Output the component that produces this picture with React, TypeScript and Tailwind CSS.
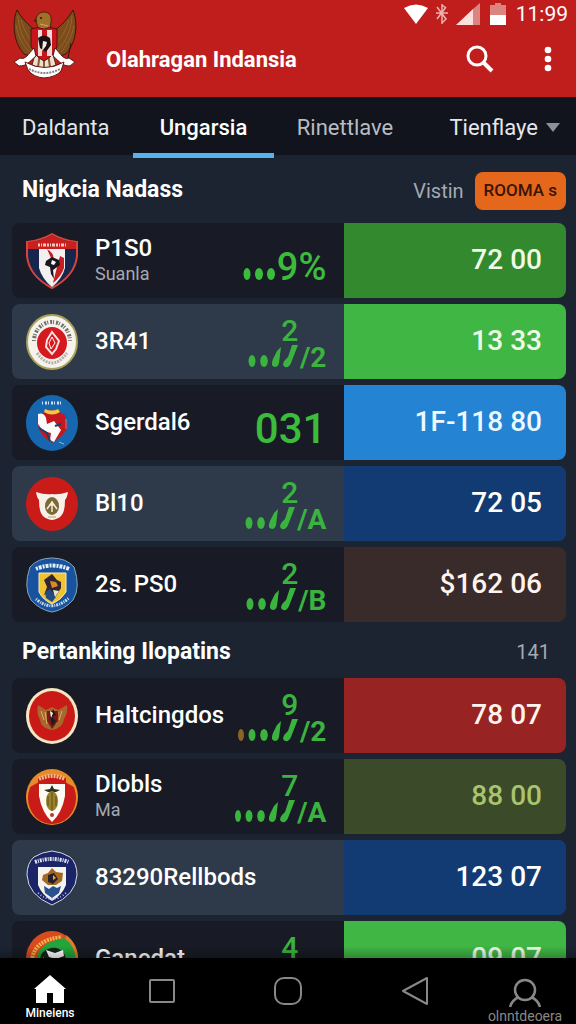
import type { ReactNode } from "react";

type Team = {
  name: string;
  note?: string;
  crest: ReactNode;
  metric?: ReactNode;
  value: string;
  rowClass: string;
  valueClass: string;
};

const DARK = "bg-[#181b25]";
const LIGHT = "bg-[#2e3a4a]";

function Garuda() {
  return (
    <svg viewBox="0 0 66 72" className="h-[72px] w-[66px]" aria-hidden="true">
      <path d="M5 2C0 14 1 34 12 46l12 4 4-24C20 20 12 14 5 2z" fill="#7d4c1c" stroke="#3b1709" strokeWidth="1" />
      <path d="M61 2c5 12 4 32-7 44l-12 4-4-24C46 20 54 14 61 2z" fill="#7d4c1c" stroke="#3b1709" strokeWidth="1" />
      <path d="M6 8c1 14 5 24 14 34M4 17c2 12 7 20 13 27M9 12c3 10 7 17 13 24M60 8c-1 14-5 24-14 34M62 17c-2 12-7 20-13 27M57 12c-3 10-7 17-13 24" fill="none" stroke="#94652c" strokeWidth="1" />
      <path d="M26 24c1-5-2-8-2-12 0-5 4-8 8-8 6 0 8 5 7 10l-1 10z" fill="#a0702a" stroke="#4a210b" strokeWidth="1" />
      <path d="M24 11l-3 2 4 1z" fill="#4a210b" />
      <circle cx="29" cy="10" r="1" fill="#2b1207" />
      <path d="M28 16l8 2M28 20l9 1" stroke="#d8a955" strokeWidth="1" />
      <path d="M24 43h16l4 14-12 5-12-5z" fill="#e9e0d2" stroke="#5a2210" strokeWidth="1" />
      <path d="M32 44v17M28 45l-2 14M36 45l2 14" stroke="#8c5d2a" strokeWidth="2" />
      <path d="M19 21q7-3 13 0 6-3 13 0v17q-3 10-13 15-10-5-13-15z" fill="#c8151c" stroke="#5a0d0d" strokeWidth="1" />
      <path d="M26 22h4v26h-4zM35 22h5v26h-5z" fill="#f0d9d5" />
      <path d="M26 30q6-5 12 0l1 7-5 7-6-4z" fill="#1b1112" />
      <path d="M31 33l4 1-1 4-4 5z" fill="#f4efec" />
      <path d="M22 40C16 46 14 52 8 50L2 54l5 4c8 0 10-4 17-10zM43 40c6 6 8 12 14 10l6 4-5 4c-8 0-10-4-17-10z" fill="#fff" stroke="#5b1715" strokeWidth="1" />
      <path d="M59 35l-3 15" stroke="#28130d" strokeWidth="1" />
      <path d="M13 54q20 11 39 0l-3 9q-5 6-17 7-11-1-16-8z" fill="#fff" stroke="#6b1513" strokeWidth="1" />
      <path d="M17 61q16 8 31 0" fill="none" stroke="#8a8080" strokeWidth="2" strokeDasharray="2 1" />
    </svg>
  );
}

function Crest({ children }: { children: ReactNode }) {
  return (
    <svg viewBox="0 0 52 56" className="h-14 w-13 shrink-0" aria-hidden="true">
      {children}
    </svg>
  );
}

const crestShield = (
  <Crest>
    <path d="M26 1q10 6 25 8v14q-2 20-25 32Q3 43 1 23V9Q16 7 26 1z" fill="#17264d" stroke="#d8453a" strokeWidth="2" />
    <path d="M2 9q15-1 24-7 9 6 24 7v7H2z" fill="#c9201f" />
    <path d="M13 16h26v19q-3 11-13 19-10-8-13-19z" fill="#f3f0f2" />
    <path d="M21 16q8 5 6 10l-6 4 6 7-2-12z" fill="#c51f23" />
    <path d="M34 23l4 2v10q-3 9-11 15l3-12z" fill="#c51f23" />
    <path d="M20 28l6-4 7 3 1 5-7 5 1 9-3-5-1-7-5-2z" fill="#1a1620" />
    <path d="M26 27l4 2-2 3-3-1z" fill="#fff" />
    <path d="M12 12h28" stroke="#f7c8bf" strokeWidth="3" strokeDasharray="2 1 1 1 3 1" />
  </Crest>
);

const crestFlame = (
  <Crest>
    <ellipse cx="26" cy="28" rx="25" ry="27" fill="#f6f3ed" stroke="#aaa15b" strokeWidth="2" />
    <ellipse cx="26" cy="29" rx="15" ry="16" fill="#d5191e" />
    <path d="M8 27a18 19 0 0 1 36 0" fill="none" stroke="#706d68" strokeWidth="4" strokeDasharray="1 2 2 1" />
    <path d="M11 39q15 20 30 0" fill="none" stroke="#b5b0a9" strokeWidth="3" strokeDasharray="2 1" />
    <path d="M26 18l7 9-3 8-4 5-6-7 1-7z" fill="none" stroke="#ffe2df" strokeWidth="2" />
    <path d="M26 23l-3 6 2 6 4-6z" fill="none" stroke="#fff" strokeWidth="1" />
  </Crest>
);

const crestBlue = (
  <Crest>
    <ellipse cx="26" cy="28" rx="26" ry="28" fill="#1767b0" />
    <path d="M16 8h20" stroke="#cfe2f5" strokeWidth="3" strokeDasharray="1 2 2 1" />
    <path d="M11 20q8-1 10-6 5 3 10 0 3 4 8 6l2 14q-5 8-15 14-13-8-14-18z" fill="#c5181e" />
    <path d="M19 14q7 3 13 0l2 3q-8 5-16 0z" fill="#f1c941" />
    <path d="M12 19q6-2 8 4l1 6 7-3 7 9-7 12-4-2 1-7-8-2-5-7z" fill="#fafafa" />
    <path d="M13 33l8 5 3 8M29 31l6-2" fill="none" stroke="#183f6b" strokeWidth="2" />
    <path d="M40 24v10" stroke="#ef6c65" strokeWidth="1" />
    <path d="M33 47l5 2" stroke="#83bdeb" strokeWidth="1" />
  </Crest>
);

const crestRed = (
  <Crest>
    <ellipse cx="26" cy="28" rx="26" ry="27" fill="#c91b18" />
    <path d="M10 16q9 3 16 2 7 1 16-2-1 6-3 8 0 12-4 16-3 3-9 4-6-1-9-4-4-4-4-16-2-2-3-8z" fill="#f8f1e9" />
    <ellipse cx="26" cy="30" rx="7" ry="9" fill="#7b6a35" />
    <path d="M21 33l5-7 5 7M26 25v11M23 29h6" fill="none" stroke="#f4ecd8" strokeWidth="1.5" />
    <path d="M22 41h8" stroke="#b5a165" strokeWidth="1" />
  </Crest>
);

const crestRoyal = (
  <Crest>
    <path d="M26 1q14 0 22 9 7 20-1 33-9 10-21 12Q14 53 5 43-3 30 4 10 12 1 26 1z" fill="#17539f" stroke="#8ba5b5" strokeWidth="1" />
    <path d="M10 12q16-7 33 0" fill="none" stroke="#e5edf6" strokeWidth="4" strokeDasharray="2 1 3 1" />
    <path d="M10 42q16 14 33-1" fill="none" stroke="#c9d9eb" strokeWidth="3" strokeDasharray="1 1 2 1" />
    <path d="M13 16h27v19q-5 8-14 12-9-4-13-12z" fill="#f0c332" stroke="#f7ebbb" strokeWidth="1" />
    <path d="M18 23l8-6 5 6 4 2v6l-5 8-7-4-5 3 3-8z" fill="#302530" />
    <path d="M24 24l6 1 2 4-6 2z" fill="#d98b25" />
    <path d="M19 35l5-3 6 8-4 5-6-4z" fill="#224a83" />
    <path d="M27 33l6 1-4 6z" fill="#e6e6dc" />
  </Crest>
);

const crestEagle = (
  <Crest>
    <ellipse cx="26" cy="28" rx="26" ry="28" fill="#f5e7c3" />
    <ellipse cx="26" cy="28" rx="23" ry="25" fill="#c91a17" />
    <path d="M12 17l8 5 6-3 6 3 9-5q1 8-3 14-1 9-12 11-11-2-12-10-4-7-2-15z" fill="#a8672d" />
    <path d="M15 23l3 9M19 24l2 12M36 23l-3 9M32 24l-2 12" stroke="#d9b16a" strokeWidth="1" />
    <path d="M21 23h11v10l-6 8-5-8z" fill="#7e1715" />
    <path d="M27 21l3 6-4 2 4 4-4 5-2-9z" fill="#22191d" />
    <path d="M24 23l3 2-2 5z" fill="#fff4df" />
  </Crest>
);

const crestGold = (
  <Crest>
    <ellipse cx="26" cy="28" rx="26" ry="28" fill="#e58c29" />
    <ellipse cx="26" cy="29" rx="24" ry="26" fill="#c91b18" />
    <path d="M4 18Q10 2 26 1q16 1 22 17l-9-5H13z" fill="#e58c29" />
    <path d="M12 9q14-7 28 0v5H12z" fill="#c91b18" />
    <path d="M13 10q13-6 26 0" fill="none" stroke="#f4ba89" strokeWidth="4" strokeDasharray="2 1" />
    <path d="M13 15h26v12q-3 17-13 26-10-9-13-26z" fill="#fdf9f3" />
    <path d="M26 16l2 4 6 1-4 2h-8l-4-2 6-1z" fill="#28301e" />
    <ellipse cx="26" cy="32" rx="6" ry="10" fill="#98832c" />
    <path d="M26 23v19M22 27v10M30 27v10" stroke="#5a4c19" strokeWidth="1" />
    <circle cx="26" cy="46" r="2" fill="#b23a32" />
  </Crest>
);

const crestNavy = (
  <Crest>
    <path d="M26 1q10 1 18 6 7 6 7 18-1 20-25 30Q2 45 1 25 1 13 8 7 16 2 26 1z" fill="#1c2468" stroke="#d5d9e6" strokeWidth="1" />
    <path d="M9 12q17-6 34 0" fill="none" stroke="#dfe3f0" strokeWidth="4" strokeDasharray="2 1 1 1" />
    <path d="M12 17h28v18q-4 10-14 16-10-6-14-16z" fill="#f6f2ec" />
    <path d="M26 18l4 4 7 1-1 8-6 4h-8l-6-5 1-5 5-2z" fill="#a06823" />
    <path d="M22 25l6-2 4 6-5 5-5-2z" fill="#251f2b" />
    <path d="M27 25l3 3-3 2z" fill="#e7a835" />
    <path d="M18 36l5 3 4-3 4 2 4-2-2 7-7 5-7-5z" fill="#28518f" />
    <path d="M12 43q14 12 28 0" fill="none" stroke="#aeb5da" strokeWidth="2" strokeDasharray="1 2" />
  </Crest>
);

const crestGreen = (
  <Crest>
    <ellipse cx="26" cy="28" rx="26" ry="28" fill="#d94b1f" />
    <path d="M40 4a26 28 0 0 1 12 26H36z" fill="#e5792a" />
    <path d="M6 30Q7 9 36 6" fill="none" stroke="#f3b44a" strokeWidth="4" strokeDasharray="2 1" />
    <path d="M10 32q0-20 28-25 12 8 12 24l-6 16H16z" fill="#22a53b" />
    <path d="M14 32q-1-11 8-14 9-4 16 4l3 8-4 12H18z" fill="#14231b" />
    <path d="M20 19l9 3 8-3 1 6-8 3-7-2zM17 26l7 6-3 5z" fill="#fff" />
  </Crest>
);

function Big({ dots = false, children }: { dots?: boolean; children: ReactNode }) {
  return (
    <div className="flex items-baseline gap-0.5 pt-3 text-[#3bbd3b]">
      {dots && (
        <svg viewBox="0 0 32 12" className="h-3 w-8" fill="currentColor" aria-hidden="true">
          <ellipse cx="4" cy="6" rx="3.5" ry="6" />
          <ellipse cx="16" cy="6" rx="4" ry="6" />
          <ellipse cx="28" cy="6" rx="4" ry="6" />
        </svg>
      )}
      <span className={dots ? "text-[38px] leading-10 font-medium" : "text-[42px] leading-10 font-medium"}>{children}</span>
    </div>
  );
}

function Trend({ top, end, lead }: { top: string; end: string; lead?: string }) {
  return (
    <div className="flex flex-col items-end pt-1 text-[#3bb33f]">
      <span className="mr-7 text-[30px] leading-[26px] font-medium">{top}</span>
      <div className="flex items-end">
        <svg viewBox="0 0 62 26" className="h-[26px] w-[62px]" fill="currentColor" aria-hidden="true">
          {lead && <ellipse cx="3" cy="17" rx="3" ry="6" fill={lead} />}
          <ellipse cx="14" cy="17" rx="3.5" ry="6" />
          <ellipse cx="26" cy="17" rx="3.8" ry="6" />
          <path d="M43 3l-2 16q-1 4-4 4-5-1-2-8l4-8z" />
          <path d="M60 1l-7 18q-2 5-6 4-4-2 0-7l3-3 4-12z" />
        </svg>
        <span className="text-[28px] leading-6 font-bold">/{end}</span>
      </div>
    </div>
  );
}

const matches: Team[] = [
  { name: "P1S0", note: "Suanla", crest: crestShield, metric: <Big dots>9%</Big>, value: "72 00", rowClass: DARK, valueClass: "bg-[#33892e] text-[#effbe5]" },
  { name: "3R41", crest: crestFlame, metric: <Trend top="2" end="2" />, value: "13 33", rowClass: LIGHT, valueClass: "bg-[#40b645] text-[#effbe5]" },
  { name: "Sgerdal6", crest: crestBlue, metric: <Big>031</Big>, value: "1F-118 80", rowClass: DARK, valueClass: "bg-[#2583d3] text-[#edf8ff]" },
  { name: "Bl10", crest: crestRed, metric: <Trend top="2" end="A" />, value: "72 05", rowClass: LIGHT, valueClass: "bg-[#123b73] text-white" },
  { name: "2s. PS0", crest: crestRoyal, metric: <Trend top="2" end="B" />, value: "$162 06", rowClass: DARK, valueClass: "bg-[#392b29] text-[#fff3ee]" },
];

const rankings: Team[] = [
  { name: "Haltcingdos", crest: crestEagle, metric: <Trend top="9" end="2" lead="#8c6424" />, value: "78 07", rowClass: DARK, valueClass: "bg-[#982323] text-[#fff3ee]" },
  { name: "Dlobls", note: "Ma", crest: crestGold, metric: <Trend top="7" end="A" lead="#3bb33f" />, value: "88 00", rowClass: DARK, valueClass: "bg-[#3b4a29] text-[#a9c46c]" },
  { name: "83290Rellbods", crest: crestNavy, value: "123 07", rowClass: LIGHT, valueClass: "bg-[#123b73] text-white" },
  { name: "Ganedat", crest: crestGreen, metric: <Trend top="4" end="2" />, value: "09 07", rowClass: DARK, valueClass: "bg-[#40b645] text-[#effbe5]" },
];

function TeamRow({ team }: { team: Team }) {
  return (
    <li className={`flex h-[75px] shrink-0 overflow-hidden rounded-lg ${team.rowClass}`}>
      <div className="flex w-3/5 items-center pr-[18px] pl-[14px]">
        {team.crest}
        <div className="ml-[17px] flex-1 pb-0.5 whitespace-nowrap">
          <p className="text-2xl leading-7 font-medium text-white">{team.name}</p>
          {team.note && <p className="text-lg leading-6 text-[#a5a9b2]">{team.note}</p>}
        </div>
        {team.metric}
      </div>
      <div className={`flex w-2/5 items-center justify-end pr-6 pb-0.5 text-[28px] font-medium ${team.valueClass}`}>{team.value}</div>
    </li>
  );
}

function StatusBar() {
  return (
    <div className="flex h-7 items-center justify-end gap-2 pr-2 text-white">
      <svg viewBox="0 0 24 20" className="h-5 w-6" aria-hidden="true">
        <path d="M0 4q12-7 24 0L12 20z" fill="#fff" />
      </svg>
      <svg viewBox="0 0 12 20" className="h-5 w-3" fill="none" stroke="#eeb3b0" strokeWidth="1.5" aria-hidden="true">
        <path d="M6 0v20M1 3l9 12-4 4M10 3L1 15M0 9h12M6 1l4 3" />
      </svg>
      <svg viewBox="0 0 24 22" className="h-[22px] w-6" aria-hidden="true">
        <path d="M0 22L17 6v16z" fill="#fbe0dd" />
        <path d="M17 6l7-6v22h-7z" fill="#dc8580" />
      </svg>
      <svg viewBox="0 0 16 22" className="mx-0.5 h-[22px] w-4" aria-hidden="true">
        <path d="M0 2h5V0h6v2h5v10H0z" fill="#dc8580" />
        <path d="M0 12h16v10H0z" fill="#fff" />
      </svg>
      <span className="text-[21px] leading-6">11:99</span>
    </div>
  );
}

const tabs = ["Daldanta", "Ungarsia", "Rinettlave", "Tienflaye"];
const tabStyles = [
  "pl-[22px] text-[#e4e6ea]",
  "justify-center font-medium text-white border-b-[5px] border-[#57b3ee] pt-[5px]",
  "justify-center text-[#b9bcc3]",
  "justify-end gap-2 pr-4 text-[#e4e6ea]",
];

function BottomNav() {
  const item = "flex flex-col items-center justify-center";
  return (
    <nav className="grid h-[66px] shrink-0 grid-cols-[100fr_124fr_128fr_126fr_98fr] bg-black text-[#8a8886]">
      <button className={`${item} pt-4 text-white`}>
        <svg viewBox="0 0 32 28" className="h-7 w-8" fill="currentColor" aria-hidden="true">
          <path d="M16 0l16 14h-2v14H19V18h-6v10H2V14H0z" />
        </svg>
        <span className="text-xs leading-5 font-medium">Mineiens</span>
      </button>
      <button className={item} aria-label="Recent">
        <svg viewBox="0 0 26 24" className="h-6 w-[26px]" fill="none" stroke="currentColor" strokeWidth="2" aria-hidden="true">
          <rect x="1" y="1" width="24" height="22" rx="1" />
        </svg>
      </button>
      <button className={item} aria-label="Home">
        <svg viewBox="0 0 28 28" className="size-7" fill="none" stroke="currentColor" strokeWidth="2" aria-hidden="true">
          <rect x="1" y="1" width="26" height="26" rx="9" />
        </svg>
      </button>
      <button className={item} aria-label="Back">
        <svg viewBox="0 0 26 28" className="h-7 w-[26px]" fill="none" stroke="currentColor" strokeWidth="2" strokeLinejoin="round" aria-hidden="true">
          <path d="M25 1v26L1 14z" />
        </svg>
      </button>
      <button className={`${item} pt-5 pr-1`}>
        <svg viewBox="0 0 32 30" className="h-[30px] w-8" fill="none" stroke="currentColor" strokeWidth="2.5" aria-hidden="true">
          <circle cx="16" cy="12" r="10" />
          <path d="M1 29q2-7 9-10M31 29q-2-7-9-10" />
        </svg>
        <span className="text-sm leading-4">olnntdeoera</span>
      </button>
    </nav>
  );
}

export default function App() {
  return (
    <div className="flex h-screen flex-col overflow-hidden bg-[#1b2430] font-[Roboto,sans-serif]">
      <header className="relative h-[97px] shrink-0 bg-[#bf1e1d]">
        <StatusBar />
        <div className="flex h-[62px] items-center pr-4 pl-[106px] text-white">
          <h1 className="flex-1 text-[22px] font-bold">Olahragan Indansia</h1>
          <button aria-label="Search" className="mr-[42px]">
            <svg viewBox="0 0 28 28" className="size-7" fill="none" stroke="currentColor" strokeWidth="3" aria-hidden="true">
              <circle cx="11" cy="11" r="9" />
              <path d="M17 17l9 9" strokeWidth="4" />
            </svg>
          </button>
          <button aria-label="More">
            <svg viewBox="0 0 24 26" className="h-[26px] w-6" fill="currentColor" aria-hidden="true">
              <circle cx="12" cy="4" r="3.3" />
              <circle cx="12" cy="13" r="3.3" />
              <circle cx="12" cy="22" r="3.3" />
            </svg>
          </button>
        </div>
        {/* Emblem overlaps the status bar */}
        <div className="absolute top-2 left-3">
          <Garuda />
        </div>
      </header>

      <nav className="grid h-[61px] shrink-0 grid-cols-[133fr_141fr_142fr_160fr] bg-linear-to-b from-[#11141c] from-95% to-[#1b2430] to-95% text-[22px]">
        {tabs.map((tab, i) => (
          <button key={tab} className={`flex items-center ${tabStyles[i]}`}>
            {tab}
            {i === 3 && (
              <svg viewBox="0 0 14 9" className="h-[9px] w-[14px]" fill="#8b909d" aria-hidden="true">
                <path d="M0 0h14L7 9z" />
              </svg>
            )}
          </button>
        ))}
      </nav>

      <main className="relative min-h-0 flex-1 overflow-hidden pr-[10px] pl-3">
        <section>
          <div className="flex h-[65px] items-center pl-[10px]">
            <h2 className="flex-1 text-[23px] font-bold text-white">Nigkcia Nadass</h2>
            <span className="mr-[11px] text-xl text-[#a5a9b2]">Vistin</span>
            <button className="h-[38px] rounded-lg bg-[#e4671b] px-[9px] text-[17px] font-medium text-[#3a1405]">ROOMA s</button>
          </div>
          <ul className="flex flex-col gap-[6px]">
            {matches.map((team) => (
              <TeamRow key={team.name} team={team} />
            ))}
          </ul>
        </section>

        <section>
          <div className="flex h-[56px] items-center pt-1 pr-4 pl-[10px]">
            <h2 className="flex-1 text-[23px] font-bold text-white">Pertanking Ilopatins</h2>
            <span className="text-xl text-[#a5a9b2]">141</span>
          </div>
          <ul className="flex flex-col gap-[6px]">
            {rankings.map((team) => (
              <TeamRow key={team.name} team={team} />
            ))}
          </ul>
        </section>
        <div className="absolute inset-x-0 bottom-0 h-3 bg-linear-to-t from-black/25 to-transparent" />
      </main>

      <BottomNav />
    </div>
  );
}
